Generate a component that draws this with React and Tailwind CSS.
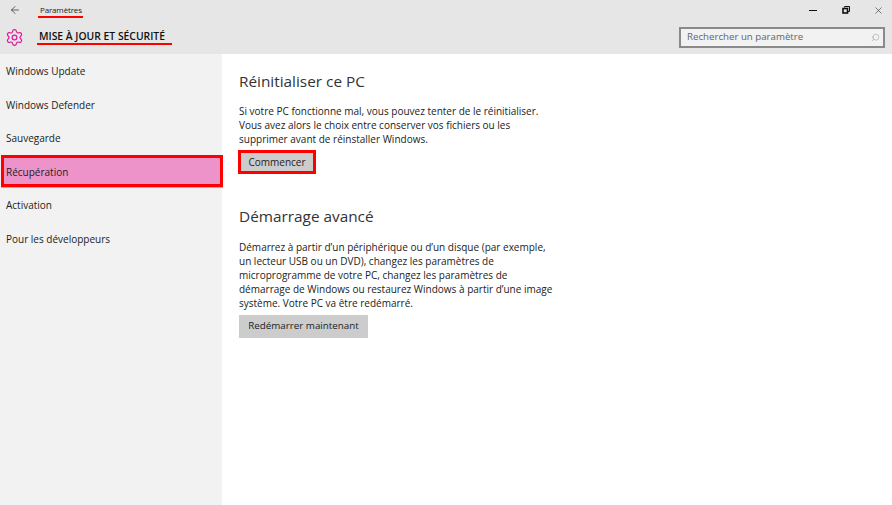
import { ArrowLeft, Search, Settings, X } from "lucide-react";

const menu = [
  { label: "Windows Update" },
  { label: "Windows Defender" },
  { label: "Sauvegarde" },
  { label: "Récupération", active: true },
  { label: "Activation" },
  { label: "Pour les développeurs" },
];

function MenuItem({ label, active }) {
  if (active) {
    return (
      <div className="h-[33.5px] flex items-center">
        <div className="ml-[1px] -mr-[1px] -mt-[2px] flex-1 h-[32px] flex items-center pl-[2px] pt-[2px] border-[3px] border-[#ff0000] bg-[#ee92ca] shadow-[0_1px_0_#ee92ca] text-[10px] text-[#222]">
          {label}
        </div>
      </div>
    );
  }
  return (
    <div className="h-[33.5px] flex items-center pl-[6px] text-[10px] text-[#222]">{label}</div>
  );
}

export default function App() {
  return (
    <div className="w-[892px] h-[505px] flex flex-col overflow-hidden bg-white font-['Open_Sans',sans-serif]">
      <header className="h-[54px] shrink-0 bg-[#e6e6e6] flex flex-col">
        <div className="h-[20px] flex items-center">
          <ArrowLeft size={12} strokeWidth={1.25} className="ml-[9px] text-[#111]" />
          <span className="relative ml-[19px] text-[8px] tracking-[-0.15px] text-[#222]">
            Paramètres
            <span className="absolute left-[-2px] right-[-1px] top-[12px] h-[2px] bg-[#ff0000]" />
          </span>
          <div className="ml-auto flex items-center text-[#222]">
            <span className="w-[8px] h-[1px] bg-[#111] mr-[25px]" />
            <svg width="8" height="8" viewBox="0 0 8 8" className="mr-[23px]" fill="none" stroke="#111">
              <path d="M2.5 1.5V.5h5v5H6" strokeWidth="1" />
              <rect x="1" y="2.5" width="4.5" height="4.5" strokeWidth="1.6" />
            </svg>
            <X size={11} strokeWidth={1.25} className="mr-[8px]" />
          </div>
        </div>
        <div className="flex-1 flex items-center">
          <Settings size={19} strokeWidth={1.5} className="ml-[5px] text-[#e3169b]" />
          <span className="relative ml-[15px] text-[10.35px] font-semibold text-[#111]">
            MISE À JOUR ET SÉCURITÉ
            <span className="absolute left-[-2px] right-[-7px] top-[14px] h-[2px] bg-[#ff0000]" />
          </span>
          <div className="ml-auto mr-[7px] mt-[1px] w-[206px] h-[21px] flex items-center border-2 border-[#8a8a8a] bg-[#f2f2f2] pl-[6px] pr-[3px]">
            <span className="text-[9.7px] text-[#666]">Rechercher un paramètre</span>
            <Search size={9} strokeWidth={1} className="ml-auto text-[#777] -scale-x-100" />
          </div>
        </div>
      </header>
      <div className="flex-1 flex">
        <nav className="w-[222px] shrink-0 bg-[#f2f2f2] pt-[1px]">
          {menu.map((item) => (
            <MenuItem key={item.label} label={item.label} active={item.active} />
          ))}
        </nav>
        <main className="pl-[17px] pt-[15px] text-[#222]">
          <h2 className="text-[15.35px] leading-[24px] text-[#333]">Réinitialiser ce PC</h2>
          <p className="mt-[11px] text-[10px] leading-[14px] w-[320px]">
            Si votre PC fonctionne mal, vous pouvez tenter de le réinitialiser.
            <br />
            Vous avez alors le choix entre conserver vos fichiers ou les
            <br />
            supprimer avant de réinstaller Windows.
          </p>
          <button className="mt-[4px] -ml-[1px] block w-[78px] h-[24px] border-[3px] border-[#ff0000] bg-[#cccccc] text-[10px] text-[#222]">
            Commencer
          </button>
          <h2 className="mt-[30px] text-[15.35px] leading-[24px] text-[#333]">Démarrage avancé</h2>
          <p className="mt-[12px] text-[10px] leading-[14px] w-[330px]">
            Démarrez à partir d’un périphérique ou d’un disque (par exemple,
            <br />
            un lecteur USB ou un DVD), changez les paramètres de
            <br />
            microprogramme de votre PC, changez les paramètres de
            <br />
            démarrage de Windows ou restaurez Windows à partir d’une image
            <br />
            système. Votre PC va être redémarré.
          </p>
          <button className="mt-[5px] block w-[129px] h-[23px] bg-[#cccccc] text-[9.8px] text-[#222]">
            Redémarrer maintenant
          </button>
        </main>
      </div>
    </div>
  );
}
